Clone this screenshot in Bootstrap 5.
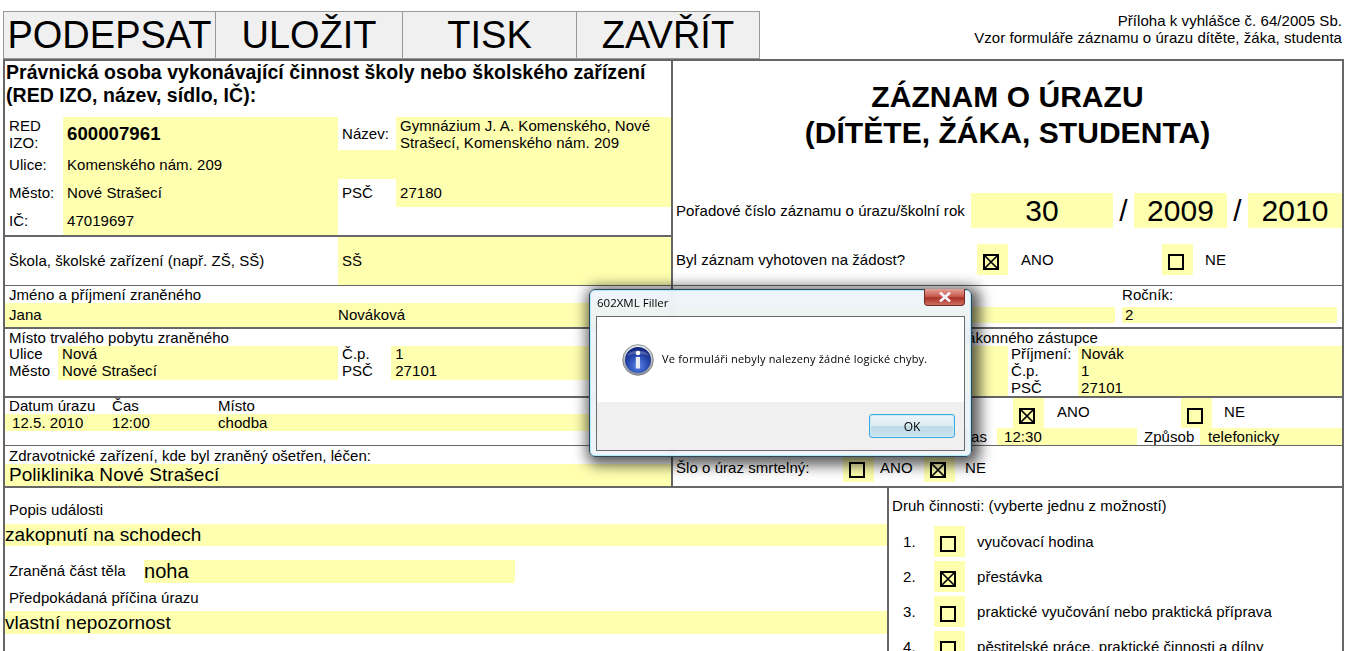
<!DOCTYPE html>
<html lang="cs"><head><meta charset="utf-8"><title>Záznam o úrazu</title>
<link href="https://cdn.jsdelivr.net/npm/bootstrap@5.3.0/dist/css/bootstrap.min.css" rel="stylesheet">
<style>
html,body{height:651px;overflow:hidden;background:#fff}
body{font:15px/17px "Liberation Sans",Arial,sans-serif;letter-spacing:.05px;color:#000;position:relative}
.top-zone{height:59px;padding:11px 17px 0 3px}
.btn.tool{height:48px;border:1px solid #999;border-left-width:0;border-radius:0;background:#f0f0f0;color:#000;font:38px/46px "Liberation Sans",sans-serif;padding:0}
.btn.tool:first-child{border-left-width:1px}
.b1{width:213px}.b2{width:187px}.b3{width:174px}.b4{width:183px}
.annex{line-height:17px;text-align:right;padding-top:1px;padding-right:2px}
.sheet{margin-left:3px;width:1341px;border:2px solid #666;border-bottom:0}
.col-l{width:668px;border-right:2px solid #666}
.col-r{width:669px}
.sec{border-bottom:2px solid #666}
.thin{border-bottom-width:1px}
.yl{background:#ffffb0}
.px4{padding-left:4px}
.legal{height:56px;font:bold 19.5px/23px "Liberation Sans",sans-serif;padding:0 0 0 1px}
.ht33{height:33px}.ht29{height:29px}.ht28{height:28px}.ht17{height:17px}
.ht28>div{padding-bottom:2px}
.w58{width:58px;flex:none}.w275{width:275px;flex:none}.w53{width:53px;flex:none}.w280{width:280px;flex:none}
.grow{flex:1 1 0;min-width:0}
.izo{font:bold 18.6px "Liberation Sans",sans-serif}
.s2{height:49px}.s2a{width:333px;flex:none;padding-left:4px}
.s2>div{padding-bottom:2px}
.s3{height:43px}.lab{height:17px;padding-left:4px;line-height:17px}
.s3v{height:24px;line-height:23px}
.s3a{width:333px;flex:none;padding-left:4px}
.s4{height:69px}.s5{height:48px}.s6{height:42px}
.s4 .ht17{line-height:15px}
.lab16{height:16px;line-height:16px;padding-left:4px}
.lab18{height:18px;line-height:19px;padding-left:4px}
.mt5s{height:17px;line-height:17px}
.d1{width:107px;flex:none;padding-left:7px}.d2{width:106px;flex:none}
.l1{width:107px;flex:none;padding-left:4px}
.big19{font-size:19px;line-height:22px}
.s6y{height:22px;padding-left:4px}
/* right column */
.rtop{height:225px}
.titlebox{height:132px;padding-top:18px;font:bold 30px/36px "Liberation Sans",sans-serif;text-align:center}
.order{height:35px}
.ol{width:298px;flex:none;padding-left:3px}
.on{font-size:30px;line-height:35px;text-align:center}
.o1{width:142px;flex:none}.o2{width:93px;flex:none}.o3{width:94px;flex:none}
.slash{width:21px;flex:none;font-size:30px;line-height:35px;text-align:center}
.req{height:31px;margin-top:16px}
.reql{width:304px;flex:none;padding-left:3px}
.cell{width:31px;flex:none;display:flex;align-items:center;justify-content:center;padding:5px 3px 0 0}
.cell svg{display:block}
.h31{height:31px}.h30{height:30px}.h50{height:50px}
.a1{width:154px;flex:none;padding-left:13px}
.n1{padding-left:12px}
.rr1{height:43px}
.rl{padding-left:449px;height:21px;line-height:17px}
.rf{height:16px}
.ry1{width:442px;flex:none;line-height:16px}.rgap{width:7px;flex:none}.ry2{width:215px;flex:none;padding-left:3px;line-height:16px}
.rr2{height:69px}
.guard{height:17px;text-align:right;padding-right:244px;line-height:18px;white-space:nowrap}
.gl{width:335px;flex:none}.gm{width:70px;flex:none;padding-left:3px}
.gl2{height:17px;line-height:15px}
.gv{height:17px;line-height:15px;padding-left:3px}
.rr3{height:48px}
.rr3 .i1,.rr3 .n1{padding-bottom:3px}
.i0{width:340px;flex:none}
.i1{width:137px;flex:none;padding-left:13px}
.t0{width:324px;flex:none;padding:0 10px 0 3px;text-align:right}.t1{width:140px;flex:none;padding-left:7px}.t2{width:63px;flex:none;padding-left:7px}
.rr4{height:42px;padding-top:6px}
.dl{width:170px;flex:none;padding-left:3px}
.da{width:50px;flex:none;padding-left:6px}.dn{padding-left:10px}
/* lower */
.lower{height:170px}
.col-w{width:884px;border-right:2px solid #666}
.pop{height:36px;padding:13px 0 0 4px;line-height:17px}
.f19{font-size:19px;line-height:22px;height:22px}
.part{height:23px;margin-top:14px}
.pl{width:139px;flex:none;padding-left:4px;padding-top:2px}
.pv{width:371px;flex:none;font-size:20px;line-height:23px;height:23px}
.pred{height:28px;padding:6px 0 0 4px}
.vl{height:23px;line-height:23px}
.druh{padding:9px 0 0 3px;height:38px;line-height:18px}
.crow{height:31px;margin-bottom:4px}
.cnum{width:45px;flex:none;padding-left:14px;line-height:32px}
.ctxt{padding-left:12px;line-height:32px}
/* dialog */
.dlg{position:absolute;left:589px;top:289px;width:383px;height:168px;border-radius:6px;background:rgba(236,243,250,.9);backdrop-filter:blur(3px);border:1px solid #30465a;box-shadow:0 0 0 1px rgba(170,235,252,.95) inset,3px 3px 14px 5px rgba(0,0,0,.65);font-family:"Open Sans",sans-serif;letter-spacing:0}
.dlg-t{position:absolute;left:7px;top:6px;font-size:11.5px;line-height:14px;color:#000}
.dlg-x{position:absolute;right:6px;top:-1px;width:41px;height:17px;border-radius:0 0 4px 4px;border:1px solid #6d2a25;border-top:0;background:linear-gradient(#e5a096,#c6584c 48%,#a83226 55%,#cf6e60);display:flex;align-items:center;justify-content:center}
.dlg-in{position:absolute;left:6px;top:26px;width:369px;height:135px;border:1px solid #6b6b6b;background:#fff}
.dlg-body{height:85px;padding:0 0 0 25px;display:flex;align-items:center;gap:8px}
.dlg-msg{font-size:11px;line-height:15px;letter-spacing:.2px;padding-bottom:2px;white-space:nowrap}
.dlg-foot{height:48px;background:#f0f0f0;padding:12px 9px 0 0;display:flex;justify-content:flex-end}
.btn.okb{width:86px;height:24px;padding:0;border:1px solid #3da6d8;border-radius:3px;background:linear-gradient(#edf6fa,#dcebf2 48%,#bfdbe7 52%,#c9e2ec);color:#000;font:12px/21px "Open Sans",sans-serif;box-shadow:inset 0 0 0 1px #c9eefc}
</style></head><body>
<svg width="0" height="0" class="position-absolute"><defs>
<symbol id="b0" viewBox="0 0 16 16"><rect x="1" y="1" width="14" height="14" fill="none" stroke="#000" stroke-width="2"/></symbol>
<symbol id="b1" viewBox="0 0 16 16"><rect x="1" y="1" width="14" height="14" fill="none" stroke="#000" stroke-width="2"/><path d="M2 2L14 14M14 2L2 14" stroke="#000" stroke-width="1.7"/></symbol>
<radialGradient id="ig" cx="50%" cy="72%" r="65%"><stop offset="0" stop-color="#5f86e6"/><stop offset=".55" stop-color="#2b4fb5"/><stop offset="1" stop-color="#15287f"/></radialGradient>
<linearGradient id="rg" x1="0" y1="0" x2="0" y2="1"><stop offset="0" stop-color="#eceff2"/><stop offset="1" stop-color="#8d9299"/></linearGradient>
</defs></svg>

<div class="top-zone d-flex align-items-start">
  <div class="d-flex">
    <button class="btn tool b1">PODEPSAT</button><button class="btn tool b2">ULOŽIT</button><button class="btn tool b3">TISK</button><button class="btn tool b4">ZAVŘÍT</button>
  </div>
  <div class="annex ms-auto">Příloha k vyhlášce č. 64/2005 Sb.<br>Vzor formuláře záznamu o úrazu dítěte, žáka, studenta</div>
</div>

<div class="sheet">
  <div class="d-flex">
    <div class="col-l">
      <section class="sec">
        <div class="legal">Právnická osoba vykonávající činnost školy nebo školského zařízení<br>(RED IZO, název, sídlo, IČ):</div>
        <div class="d-flex ht33"><div class="w58 px4">RED IZO:</div><div class="w275 yl px4 izo d-flex align-items-center">600007961</div><div class="w58 px4 d-flex align-items-center">Název:</div><div class="grow yl px4">Gymnázium J. A. Komenského, Nové Strašecí, Komenského nám. 209</div></div>
        <div class="d-flex ht29 align-items-stretch"><div class="w58 px4 d-flex align-items-center">Ulice:</div><div class="grow yl px4 d-flex align-items-center">Komenského nám. 209</div></div>
        <div class="d-flex ht28"><div class="w58 px4 d-flex align-items-center">Město:</div><div class="w275 yl px4 d-flex align-items-center">Nové Strašecí</div><div class="w58 px4 d-flex align-items-center">PSČ</div><div class="grow yl px4 d-flex align-items-center">27180</div></div>
        <div class="d-flex ht28"><div class="w58 px4 d-flex align-items-center">IČ:</div><div class="w275 yl px4 d-flex align-items-center">47019697</div></div>
      </section>
      <section class="sec thin d-flex s2"><div class="s2a d-flex align-items-center">Škola, školské zařízení (např. ZŠ, SŠ)</div><div class="grow yl px4 d-flex align-items-center">SŠ</div></section>
      <section class="sec s3"><div class="lab">Jméno a příjmení zraněného</div><div class="d-flex yl s3v"><div class="s3a">Jana</div><div class="grow">Nováková</div></div></section>
      <section class="sec s4"><div class="lab">Místo trvalého pobytu zraněného</div>
        <div class="d-flex ht17"><div class="w53 px4">Ulice</div><div class="w280 yl px4">Nová</div><div class="w53 px4">Č.p.</div><div class="grow yl">&nbsp;1</div></div>
        <div class="d-flex ht17"><div class="w53 px4">Město</div><div class="w280 yl px4">Nové Strašecí</div><div class="w53 px4">PSČ</div><div class="grow yl">&nbsp;27101</div></div>
      </section>
      <section class="sec thin s5"><div class="d-flex lab16 ps-0"><div class="l1">Datum úrazu</div><div class="d2">Čas</div><div>Místo</div></div><div class="d-flex yl mt5s"><div class="d1">12.5. 2010</div><div class="d2">12:00</div><div>chodba</div></div></section>
      <section class="sec s6"><div class="lab18">Zdravotnické zařízení, kde byl zraněný ošetřen, léčen:</div><div class="yl big19 s6y">Poliklinika Nové Strašecí</div></section>
    </div>
    <div class="col-r">
      <section class="sec thin rtop">
        <div class="titlebox">ZÁZNAM O ÚRAZU<br>(DÍTĚTE, ŽÁKA, STUDENTA)</div>
        <div class="d-flex order align-items-stretch"><div class="ol d-flex align-items-center">Pořadové číslo záznamu o úrazu/školní rok</div><div class="o1 yl on">30</div><div class="slash">/</div><div class="o2 yl on">2009</div><div class="slash">/</div><div class="o3 yl on">2010</div></div>
        <div class="d-flex req align-items-center"><div class="reql">Byl záznam vyhotoven na žádost?</div><div class="cell yl h31"><svg width="16" height="16"><use href="#b1"/></svg></div><div class="a1">ANO</div><div class="cell yl h31"><svg width="16" height="16"><use href="#b0"/></svg></div><div class="n1">NE</div></div>
      </section>
      <section class="sec rr1">
        <div class="rl">Ročník:</div>
        <div class="d-flex rf"><div class="ry1 yl ps-1">&nbsp;</div><div class="rgap"></div><div class="ry2 yl">2</div></div>
      </section>
      <section class="sec rr2">
        <div class="guard">Místo trvalého pobytu a jméno a příjmení zákonného zástupce</div>
        <div class="d-flex h50">
          <div class="gl yl"></div>
          <div class="gm"><div class="gl2">Příjmení:</div><div class="gl2">Č.p.</div><div class="gl2">PSČ</div></div>
          <div class="grow yl"><div class="gv">Novák</div><div class="gv">1</div><div class="gv">27101</div></div>
        </div>
      </section>
      <section class="sec thin rr3">
        <div class="d-flex h30 align-items-center"><div class="i0"></div><div class="cell yl h30"><svg width="16" height="16"><use href="#b1"/></svg></div><div class="i1">ANO</div><div class="cell yl h30"><svg width="16" height="16"><use href="#b0"/></svg></div><div class="n1">NE</div></div>
        <div class="d-flex ht17"><div class="t0">Čas</div><div class="t1 yl">12:30</div><div class="t2">Způsob</div><div class="grow yl ps-2">telefonicky</div></div>
      </section>
      <section class="sec rr4">
        <div class="d-flex h30 align-items-center"><div class="dl">Šlo o úraz smrtelný:</div><div class="cell yl h30"><svg width="16" height="16"><use href="#b0"/></svg></div><div class="da">ANO</div><div class="cell yl h30"><svg width="16" height="16"><use href="#b1"/></svg></div><div class="dn">NE</div></div>
      </section>
    </div>
  </div>
  <div class="d-flex lower">
    <div class="col-w">
      <div class="pop">Popis události</div>
      <div class="yl f19">zakopnutí na schodech</div>
      <div class="d-flex part"><div class="pl">Zraněná část těla</div><div class="pv yl">noha</div></div>
      <div class="pred">Předpokádaná příčina úrazu</div>
      <div class="yl f19 vl">vlastní nepozornost</div>
    </div>
    <div class="grow">
      <div class="druh">Druh činnosti: (vyberte jednu z možností)</div>
      <div class="d-flex crow"><div class="cnum">1.</div><div class="cell yl h31"><svg width="16" height="16"><use href="#b0"/></svg></div><div class="ctxt">vyučovací hodina</div></div>
      <div class="d-flex crow"><div class="cnum">2.</div><div class="cell yl h31"><svg width="16" height="16"><use href="#b1"/></svg></div><div class="ctxt">přestávka</div></div>
      <div class="d-flex crow"><div class="cnum">3.</div><div class="cell yl h31"><svg width="16" height="16"><use href="#b0"/></svg></div><div class="ctxt">praktické vyučování nebo praktická příprava</div></div>
      <div class="d-flex crow"><div class="cnum">4.</div><div class="cell yl h31"><svg width="16" height="16"><use href="#b0"/></svg></div><div class="ctxt">pěstitelské práce, praktické činnosti a dílny</div></div>
    </div>
  </div>
</div>

<div class="dlg" role="dialog">
  <div class="dlg-t">602XML Filler</div>
  <div class="dlg-x"><svg width="14" height="10" viewBox="0 0 14 10"><path d="M3 1.5L11 8.5M11 1.5L3 8.5" stroke="#fff" stroke-width="2.6" stroke-linecap="square"/><path d="M3 1.5L11 8.5M11 1.5L3 8.5" stroke="#eef" stroke-width="1.6"/></svg></div>
  <div class="dlg-in">
    <div class="dlg-body">
      <svg width="32" height="32" viewBox="0 0 32 32"><circle cx="16" cy="16" r="15.3" fill="url(#rg)" stroke="#6f7379" stroke-width=".8"/><circle cx="16" cy="16" r="13" fill="url(#ig)"/><path d="M5 12C7 5 25 5 27 12C22 9 10 9 5 12Z" fill="#fff" opacity=".22"/><circle cx="16" cy="9" r="2.3" fill="#fff"/><path d="M13.8 13H18V24.5H13.8Z" fill="#e8ecf6"/></svg>
      <div class="dlg-msg">Ve formuláři nebyly nalezeny žádné logické chyby.</div>
    </div>
    <div class="dlg-foot"><button class="btn okb">OK</button></div>
  </div>
</div>
<script src="https://cdn.jsdelivr.net/npm/bootstrap@5.3.0/dist/js/bootstrap.bundle.min.js"></script>
</body></html>
